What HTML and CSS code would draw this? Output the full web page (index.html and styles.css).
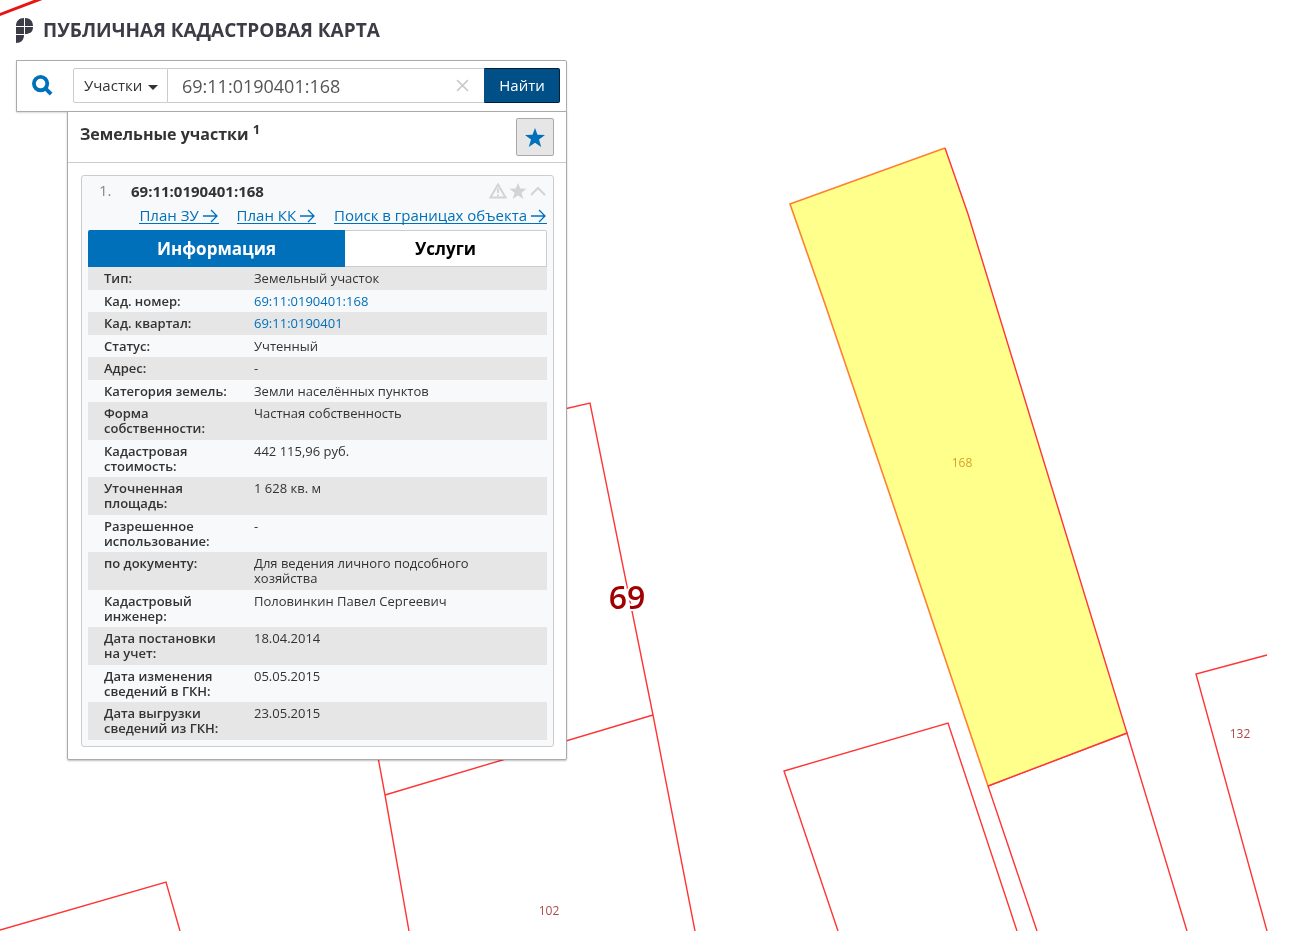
FILE: index.html
```html
<!DOCTYPE html>
<html lang="ru">
<head>
<meta charset="utf-8">
<meta name="viewport" content="width=device-width, initial-scale=1">
<title>Публичная кадастровая карта</title>
<link rel="stylesheet" href="styles.css">
</head>
<body>
<svg class="map" viewBox="0 0 1290 931" preserveAspectRatio="xMinYMin slice" role="img" aria-label="Карта участков">
  <path class="district" d="M-4 16 46-3"/>
  <g class="parcels">
    <path d="M0 930 166 882 180 931"/>
    <path d="M560 410 590 403 653 715 695 931M653 715 385 795M370 714 385 795 409 931"/>
    <path d="M838 931 784 771 948 723 1017 931"/>
    <path d="M1037 931 988 786 1127 733 1187 931"/>
    <path d="M1267 655 1196 674 1267 931"/>
  </g>
  <path class="selected" d="M790 204 945 148 968 214 1127 733 988 786 894 507 825 304Z"/>
  <path class="selected-edge" d="M945 148 790 204 825 304 894 507 988 786"/>
  <path class="parcel-edge" d="M945 148 968 214 1127 733 988 786"/>
  <text class="label label-selected" x="962" y="467">168</text>
  <text class="label" x="549" y="915">102</text>
  <text class="label" x="1240" y="738">132</text>
  <text class="district-label" x="627" y="609">69</text>
</svg>

<div class="app">
  <header class="brand">
    <svg class="logo" viewBox="0 0 17 25" aria-hidden="true">
      <path d="M8 0v8H0C0 3 3 0 8 0ZM9 0c5 0 8 3 8 8H9ZM0 9h8v7H0ZM9 9h8c0 5-3 7-8 7ZM0 17h8c0 5-3 8-8 8Z"/>
    </svg>
    <h1 class="brand-title">ПУБЛИЧНАЯ КАДАСТРОВАЯ КАРТА</h1>
  </header>

  <form class="search">
    <svg class="search-icon" viewBox="0 0 22 22" aria-hidden="true"><circle cx="9" cy="9" r="7"/><path d="m14 14 6 6"/></svg>
    <div class="search-group">
      <div class="kind">
        <select class="kind-select" aria-label="Тип объекта"><option>Участки</option></select>
      </div>
      <div class="query">
        <input class="query-input" type="text" value="69:11:0190401:168" aria-label="Кадастровый номер">
        <button class="clear" type="button" aria-label="Очистить"><svg viewBox="0 0 12 12"><path d="m1 1 10 10M11 1 1 11"/></svg></button>
      </div>
      <button class="find" type="button">Найти</button>
    </div>
  </form>

  <main class="panel">
    <div class="panel-head">
      <h2 class="panel-title">Земельные участки <sup>1</sup></h2>
      <button class="favorites" type="button" aria-label="Избранное"><svg viewBox="0 0 20 19"><path d="m10 0 2.500 6.800L20 7l-6 4.600 2.200 7.400L10 14.700 3.800 19 6 11.600 0 7l7.500-.2Z"/></svg></button>
    </div>

    <article class="card">
      <div class="card-head">
        <span class="number">1.</span>
        <h3 class="card-title">69:11:0190401:168</h3>
        <div class="tools">
          <button type="button" aria-label="Сообщить об ошибке"><svg viewBox="0 0 18 16"><path class="line" d="M9 1.500 16.500 14.500H1.500Z"/><path class="line" d="M9 5.500V10M9 11.500v2"/></svg></button>
          <button type="button" aria-label="В избранное"><svg viewBox="0 0 18 16"><path d="m9 0 2.300 5.600 6.200.2-5 3.900L14.300 16 9 12.400 3.700 16l1.800-6.300-5-3.900 6.200-.2Z"/></svg></button>
          <button type="button" aria-label="Свернуть"><svg viewBox="0 0 18 16"><path class="line" d="m2 12 7-7 7 7"/></svg></button>
        </div>
      </div>
      <nav class="links">
        <a href="#zu">План ЗУ <svg viewBox="0 0 16 14"><path d="M0 7h14M8 1l6 6-6 6"/></svg></a>
        <a href="#kk">План КК <svg viewBox="0 0 16 14"><path d="M0 7h14M8 1l6 6-6 6"/></svg></a>
        <a href="#search">Поиск в границах объекта <svg viewBox="0 0 16 14"><path d="M0 7h14M8 1l6 6-6 6"/></svg></a>
      </nav>
      <div class="tabs">
        <button class="tab tab-active" type="button">Информация</button>
        <button class="tab" type="button">Услуги</button>
      </div>
      <table class="info">
        <tbody>
        <tr><th scope="row">Тип:</th><td>Земельный участок</td></tr>
        <tr><th scope="row">Кад. номер:</th><td><a href="#n">69:11:0190401:168</a></td></tr>
        <tr><th scope="row">Кад. квартал:</th><td><a href="#q">69:11:0190401</a></td></tr>
        <tr><th scope="row">Статус:</th><td>Учтенный</td></tr>
        <tr><th scope="row">Адрес:</th><td>-</td></tr>
        <tr><th scope="row">Категория земель:</th><td>Земли населённых пунктов</td></tr>
        <tr><th scope="row">Форма<br>собственности:</th><td>Частная собственность</td></tr>
        <tr><th scope="row">Кадастровая<br>стоимость:</th><td>442 115,96 руб.</td></tr>
        <tr><th scope="row">Уточненная<br>площадь:</th><td>1 628 кв. м</td></tr>
        <tr><th scope="row">Разрешенное<br>использование:</th><td>-</td></tr>
        <tr><th scope="row">по документу:</th><td>Для ведения личного подсобного<br>хозяйства</td></tr>
        <tr><th scope="row">Кадастровый<br>инженер:</th><td>Половинкин Павел Сергеевич</td></tr>
        <tr><th scope="row">Дата постановки<br>на учет:</th><td>18.04.2014</td></tr>
        <tr><th scope="row">Дата изменения<br>сведений в ГКН:</th><td>05.05.2015</td></tr>
        <tr><th scope="row">Дата выгрузки<br>сведений из ГКН:</th><td>23.05.2015</td></tr>
        </tbody>
      </table>
    </article>
  </main>
</div>
</body>
</html>
```
FILE: styles.css
```css
* { box-sizing: border-box; }

body {
  margin: 0;
  min-height: 100vh;
  background: #fff;
  color: #333;
  font-family: "Open Sans", "Noto Sans", sans-serif;
  font-size: 13px;
  line-height: 15px;
}

h1, h2, h3 { margin: 0; font-weight: 700; }

button, input, select { font: inherit; color: inherit; }

button { cursor: pointer; padding: 0; border: 0; background: none; }

a { color: #0070ba; text-decoration: none; }

/* Map canvas behind the interface */
.map { position: fixed; inset: 0; width: 100%; height: 100%; }
.map path { fill: none; }
.map .district { stroke: #e81313; stroke-width: 3; }
.parcels path, .map .parcel-edge { stroke: #ff3535; stroke-width: 1.4; }
.map .selected { fill: #ffff8b; }
.map .selected-edge { stroke: #ff8030; stroke-width: 1.6; }
.label { font-size: 12px; text-anchor: middle; fill: #b04848; }
.label-selected { fill: #d9a02c; }
.district-label {
  font-size: 32px;
  font-weight: 600;
  text-anchor: middle;
  fill: #a00000;
  stroke: #fff;
  stroke-width: 4px;
  paint-order: stroke;
}

.app {
  position: relative;
  width: min(583px, 100%);
  padding: 0 16px;
}

.brand { display: flex; align-items: center; gap: 10px; height: 60px; }
.logo { width: 17px; height: 25px; fill: #3c3c46; }
.brand-title { font-size: 19px; line-height: 24px; color: #3c3c46; white-space: nowrap; }

.search {
  display: flex;
  align-items: center;
  gap: 20px;
  height: 52px;
  padding: 0 6px 1px 15px;
  border: 1px solid #aaa;
  border-radius: 0 2px 0 0;
  background: #fff;
  box-shadow: 0 1px 2px rgba(0, 0, 0, .15);
}
.search-icon { width: 21px; height: 21px; flex: none; fill: none; stroke: #0070ba; stroke-width: 4; }
.search-group { display: flex; flex: 1; height: 35px; }

.kind {
  position: relative;
  flex: 0 0 95px;
  border: 1px solid #ccc;
  border-radius: 2px 0 0 2px;
}
.kind-select {
  width: 100%;
  height: 100%;
  padding: 0 0 0 10px;
  border: 0;
  background: none;
  appearance: none;
  font-size: 15px;
}
.kind::after {
  content: "";
  position: absolute;
  right: 9px;
  top: 16px;
  border: 5px solid transparent;
  border-top-color: #333;
  border-bottom: 0;
  pointer-events: none;
}

.query {
  display: flex;
  flex: 1;
  align-items: center;
  min-width: 0;
  padding-right: 15px;
  border: solid #ccc;
  border-width: 1px 0;
}
.query-input {
  flex: 1;
  min-width: 0;
  height: 100%;
  padding: 0 14px;
  border: 0;
  background: none;
  color: #555;
  font-size: 18px;
}
.clear { display: flex; width: 13px; height: 13px; }
.clear svg { width: 13px; fill: none; stroke: #ccc; stroke-width: 1.5; }

.find {
  flex: 0 0 76px;
  border: 1px solid #00203a;
  border-left-color: #004f87;
  border-radius: 0 2px 2px 0;
  background: #004f87;
  color: #fff;
  font-size: 15px;
}

.panel {
  margin: -1px 0 0 51px;
  border: 1px solid #aaa;
  border-radius: 0 0 2px 2px;
  background: #fff;
  box-shadow: 0 1px 2px rgba(0, 0, 0, .25);
}
.panel-head {
  display: flex;
  justify-content: space-between;
  height: 51px;
  padding: 6px 12px;
  border-bottom: 1px solid #ccc;
}
.panel-title { font-size: 16px; line-height: 32px; }
.panel-title sup { font-size: 13px; line-height: 0; }
.favorites {
  display: flex;
  align-items: center;
  justify-content: center;
  width: 38px;
  height: 38px;
  border: 1px solid #aaa;
  border-radius: 2px;
  background: #e6e6e6;
}
.favorites svg { width: 20px; height: 19px; fill: #0070ba; }

.card {
  margin: 12px 12px 12px 13px;
  padding: 4px 6px 6px;
  border: 1px solid #ccc;
  border-radius: 3px;
  background: #f8f9fb;
}
.card-head { display: flex; align-items: center; height: 21px; padding-left: 11px; }
.number { width: 32px; color: #888; font-size: 15px; }
.card-title { flex: 1; font-size: 15px; line-height: 20px; }
.tools { display: flex; gap: 2px; }
.tools svg { display: block; width: 18px; height: 16px; fill: #d4d4d6; }
.tools .line { fill: none; stroke: #d4d4d6; stroke-width: 2; }

.links {
  display: flex;
  align-items: flex-start;
  justify-content: flex-end;
  gap: 18px;
  height: 29px;
  padding-top: 6px;
  font-size: 15px;
  line-height: 16px;
  white-space: nowrap;
}
.links a { border-bottom: 1px solid #0070ba; }
.links svg { width: 16px; height: 14px; vertical-align: -2px; fill: none; stroke: #0070ba; stroke-width: 1.3; }

.tabs { display: flex; height: 37px; }
.tab {
  flex: 0 0 44%;
  border: 1px solid #ccc;
  border-left: 0;
  border-radius: 0 2px 0 0;
  background: #fff;
  color: #000;
  font-size: 17px;
  font-weight: 700;
}
.tab-active {
  flex: 1;
  border: 0;
  border-radius: 2px 0 0 0;
  background: #0070ba;
  color: #fff;
}

.info { width: 100%; border-spacing: 0; }
.info th, .info td { padding: 4px 0 3px; text-align: left; vertical-align: top; }
.info th { width: 166px; padding-left: 16px; font-weight: 600; white-space: nowrap; }
.info tr:nth-child(odd) { background: #e6e6e6; }
.info tr:nth-child(odd) th, .info tr:nth-child(odd) td { padding-bottom: 4px; }
```
